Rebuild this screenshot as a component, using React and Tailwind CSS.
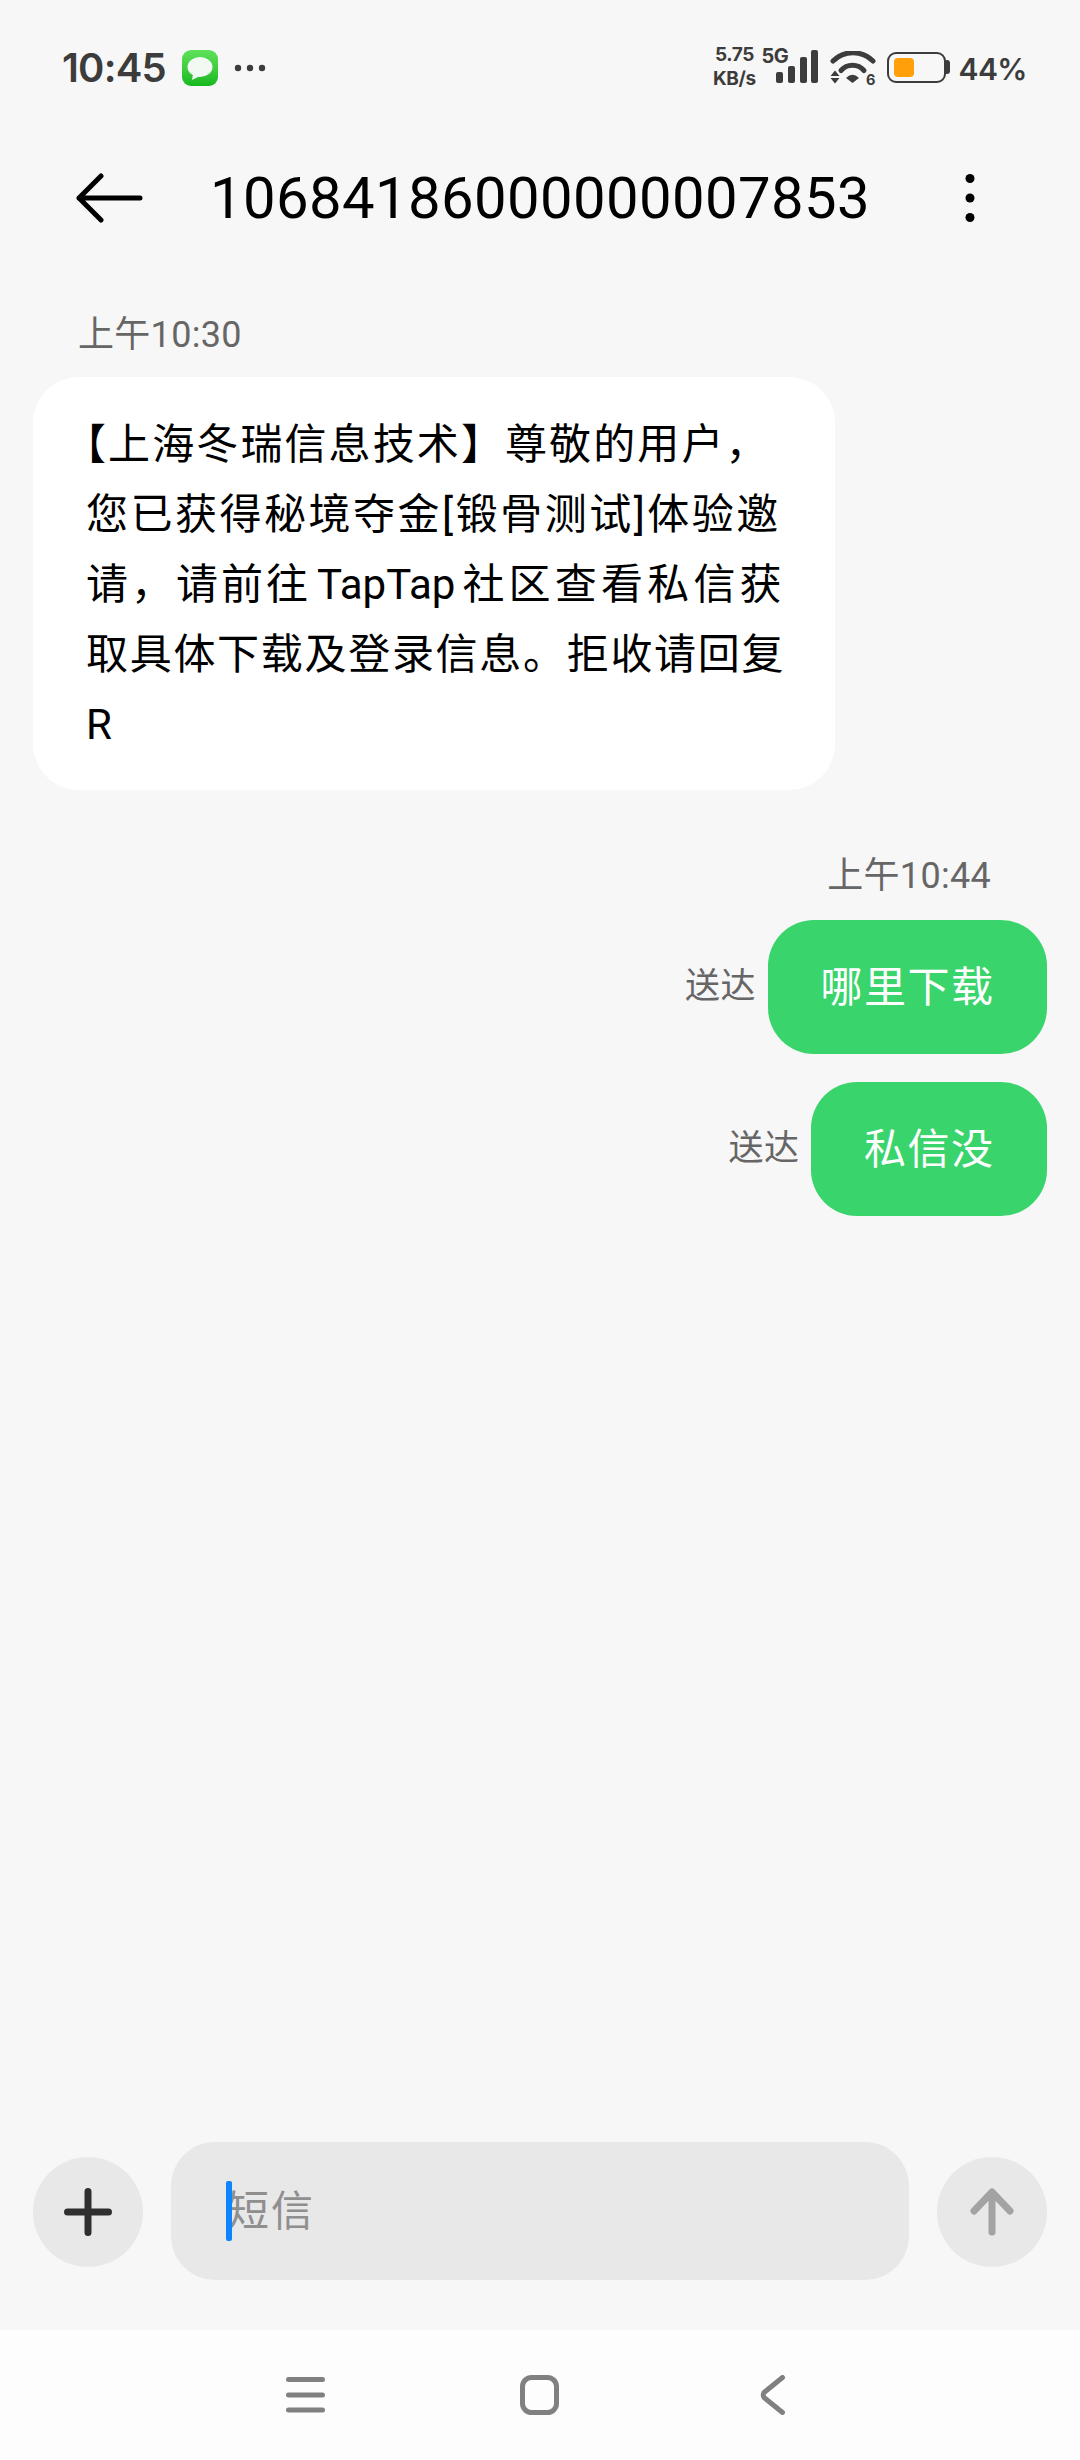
import React from "react";

const CJK = "font-['Roboto','Noto_Sans_CJK_SC',sans-serif]";

function StatusIcons() {
  return (
    <div className="flex items-center h-[42px]">
      <div className="flex flex-col items-center w-[46px] text-[19px] leading-[24px] font-bold text-[#3c3c3c] font-['Inter',sans-serif] tracking-[-0.4px]">
        <span className="whitespace-nowrap">5.75</span>
        <span className="whitespace-nowrap">KB/s</span>
      </div>
      <div className="relative ml-[19px] w-[43px] h-[34px]">
        <span className="absolute left-[-15px] top-[-6px] text-[20px] leading-[24px] font-bold text-[#3c3c3c] font-['Inter',sans-serif] tracking-[-0.4px]">5G</span>
        <svg width="43" height="34" viewBox="0 0 43 34" fill="#3c3c3c">
          <rect x="0" y="22" width="7" height="11" rx="2" />
          <rect x="12" y="16" width="7" height="17" rx="2" />
          <rect x="24" y="7" width="7" height="26" rx="2" />
          <rect x="35" y="0" width="7" height="33" rx="2" />
        </svg>
      </div>
      <svg width="47" height="40" viewBox="0 0 47 40" className="ml-[11px] mt-[8px]" fill="none">
        <path d="M3 10 C14 -1 32 -1 43 10" stroke="#3c3c3c" strokeWidth="5" strokeLinecap="round" />
        <path d="M11 19.5 C17 12.5 28 12.5 34 19.5" stroke="#3c3c3c" strokeWidth="5" strokeLinecap="round" />
        <path d="M16 27 Q22.5 20.5 29 27 L22.5 32 Z" fill="#3c3c3c" />
        <path d="M0.5 25 L5 19.5 L9.5 25 Z M0.5 27 L9.5 27 L5 32.5 Z" fill="#3c3c3c" />
        <text x="36" y="33.5" fontSize="14.5" fontWeight="700" fill="#3c3c3c" fontFamily="Inter, sans-serif">6</text>
      </svg>
      <div className="flex items-center ml-[10px]">
        <div className="w-[59px] h-[31px] rounded-[9px] border-[2.5px] border-[#3c3c3c] pl-[5px] py-[4px]">
          <div className="w-[20px] h-full rounded-[4px] bg-[#ff9f0a]" />
        </div>
        <div className="w-[4px] h-[14px] rounded-r-[3px] bg-[#3c3c3c]" />
      </div>
      <span className="ml-[8px] mt-[3px] text-[30px] leading-none font-semibold text-[#3c3c3c] font-['Inter',sans-serif] tracking-[-0.5px]">44%</span>
    </div>
  );
}

function Outgoing({ text, className }) {
  return (
    <div className={`flex items-center justify-end ${className}`}>
      <span className="mr-[12px] text-[35px] leading-[40px] text-[#666666] tracking-[0.5px]">送达</span>
      <div className="h-[134px] rounded-[46px] bg-[#39d46b] px-[52.5px] flex items-center text-[42px] text-white tracking-[1.5px] whitespace-nowrap">
        {text}
      </div>
    </div>
  );
}

export default function App() {
  return (
    <div className={`w-[1080px] h-[2460px] bg-[#f7f7f7] flex flex-col overflow-hidden ${CJK}`}>
      {/* Status bar */}
      <div className="h-[130px] flex-none flex items-start justify-between pl-[62px] pr-[53px] pt-[46px]">
        <div className="flex items-center h-[44px]">
          <span className="text-[40px] leading-[44px] font-semibold text-[#3c3c3c] font-['Inter',sans-serif] tracking-[-0.8px]">10:45</span>
          <div className="ml-[16px] w-[36px] h-[36px] rounded-[9px] bg-gradient-to-b from-[#5ee25a] to-[#12b81e] flex items-center justify-center">
            <svg width="28" height="28" viewBox="0 0 28 28">
              <ellipse cx="14" cy="13" rx="12.5" ry="10" fill="#f2f8f2" />
              <path d="M7 20 L6 26 L14 22 Z" fill="#f2f8f2" />
            </svg>
          </div>
          <svg width="32" height="8" viewBox="0 0 32 8" className="ml-[16px]" fill="#3c3c3c">
            <circle cx="4" cy="4" r="3.2" /><circle cx="16" cy="4" r="3.2" /><circle cx="28" cy="4" r="3.2" />
          </svg>
        </div>
        <StatusIcons />
      </div>

      {/* Header */}
      <div className="h-[136px] flex-none flex items-center pl-[76px] pr-[54px]">
        <svg width="68" height="50" viewBox="0 0 68 50" fill="none" stroke="#000" strokeWidth="5" strokeLinecap="round" strokeLinejoin="round">
          <path d="M25 3 L3 25 L25 47 M3 25 H64" />
        </svg>
        <h1 className="ml-[66px] text-[58px] leading-none font-normal text-black whitespace-nowrap tracking-[0.4px]">10684186000000007853</h1>
        <svg width="10" height="50" viewBox="0 0 10 50" className="ml-auto mr-[51px]" fill="#000">
          <circle cx="5" cy="5.5" r="4.5" /><circle cx="5" cy="25" r="4.5" /><circle cx="5" cy="44.5" r="4.5" />
        </svg>
      </div>

      {/* Conversation */}
      <div className="flex-1 min-h-0 flex flex-col px-[33px]">
        <div className="mt-[49px] pl-[45px] text-[36px] leading-[40px] text-[#666666] tracking-[0.3px]">上午10:30</div>
        <div className="mt-[22px] w-[802px] h-[413px] rounded-[46px] bg-white pl-[53px] pt-[33px] text-[42px] leading-[70px] text-black whitespace-nowrap">
          <p className="tracking-[2.1px] indent-[-22px]">【上海冬瑞信息技术】尊敬的用户，</p>
          <p className="tracking-[2.5px]">您已获得秘境夺金[锻骨测试]体验邀</p>
          <p>
            <span className="tracking-[3px]">请，请前往</span>
            <span className="ml-[6px] mr-[7px]">TapTap</span>
            <span className="tracking-[4.2px]">社区查看私信获</span>
          </p>
          <p className="tracking-[1.7px]">取具体下载及登录信息。拒收请回复</p>
          <p>R</p>
        </div>
        <div className="mt-[66px] pr-[56px] text-right text-[36px] leading-[40px] text-[#666666] tracking-[0.3px]">上午10:44</div>
        <Outgoing text="哪里下载" className="mt-[24px]" />
        <Outgoing text="私信没" className="mt-[28px]" />
      </div>

      {/* Composer */}
      <div className="flex-none h-[190px] flex items-start px-[33px]">
        <div className="mt-[17px] w-[110px] h-[110px] rounded-full bg-[#e8e8e8] flex items-center justify-center">
          <svg width="48" height="48" viewBox="0 0 48 48" stroke="#2f2f2f" strokeWidth="7" strokeLinecap="round">
            <path d="M24 3.5 V44.5 M3.5 24 H44.5" />
          </svg>
        </div>
        <div className="mt-[2px] ml-[28px] w-[739px] h-[138px] rounded-[44px] bg-[#e8e8e8] flex items-center pl-[56px] relative">
          <div className="absolute left-[55px] top-[39px] w-[6px] h-[60px] rounded-[2px] bg-[#0d84ff]" />
          <span className="text-[42px] text-[#8f8f8f] tracking-[2px]">短信</span>
        </div>
        <div className="mt-[17px] ml-[28px] w-[110px] h-[110px] rounded-full bg-[#e8e8e8] flex items-center justify-center">
          <svg width="44" height="48" viewBox="0 0 44 48" fill="none" stroke="#a3a3a3" strokeWidth="7" strokeLinecap="round" strokeLinejoin="round">
            <path d="M22 4 V44 M4 23 L22 4 L40 23" />
          </svg>
        </div>
      </div>

      {/* Nav bar */}
      <div className="flex-none h-[130px] bg-[#fdfdfd] flex items-start pl-[284px] pt-[45px]">
        <svg width="42" height="40" viewBox="0 0 42 40" stroke="#808080" strokeWidth="5" strokeLinecap="round">
          <path d="M4.5 4.5 H38.5 M4.5 20 H38.5 M4.5 35 H38.5" />
        </svg>
        <svg width="43" height="40" viewBox="0 0 43 40" className="ml-[192px]" fill="none" stroke="#808080" strokeWidth="5">
          <rect x="4.5" y="2.5" width="34" height="35" rx="9" />
        </svg>
        <svg width="30" height="40" viewBox="0 0 30 40" className="ml-[197px]" fill="none" stroke="#808080" strokeWidth="5" strokeLinecap="round" strokeLinejoin="round">
          <path d="M24.5 2.5 L6 17.5 Q4.5 20 6 22.5 L24.5 37.5" />
        </svg>
      </div>
    </div>
  );
}
